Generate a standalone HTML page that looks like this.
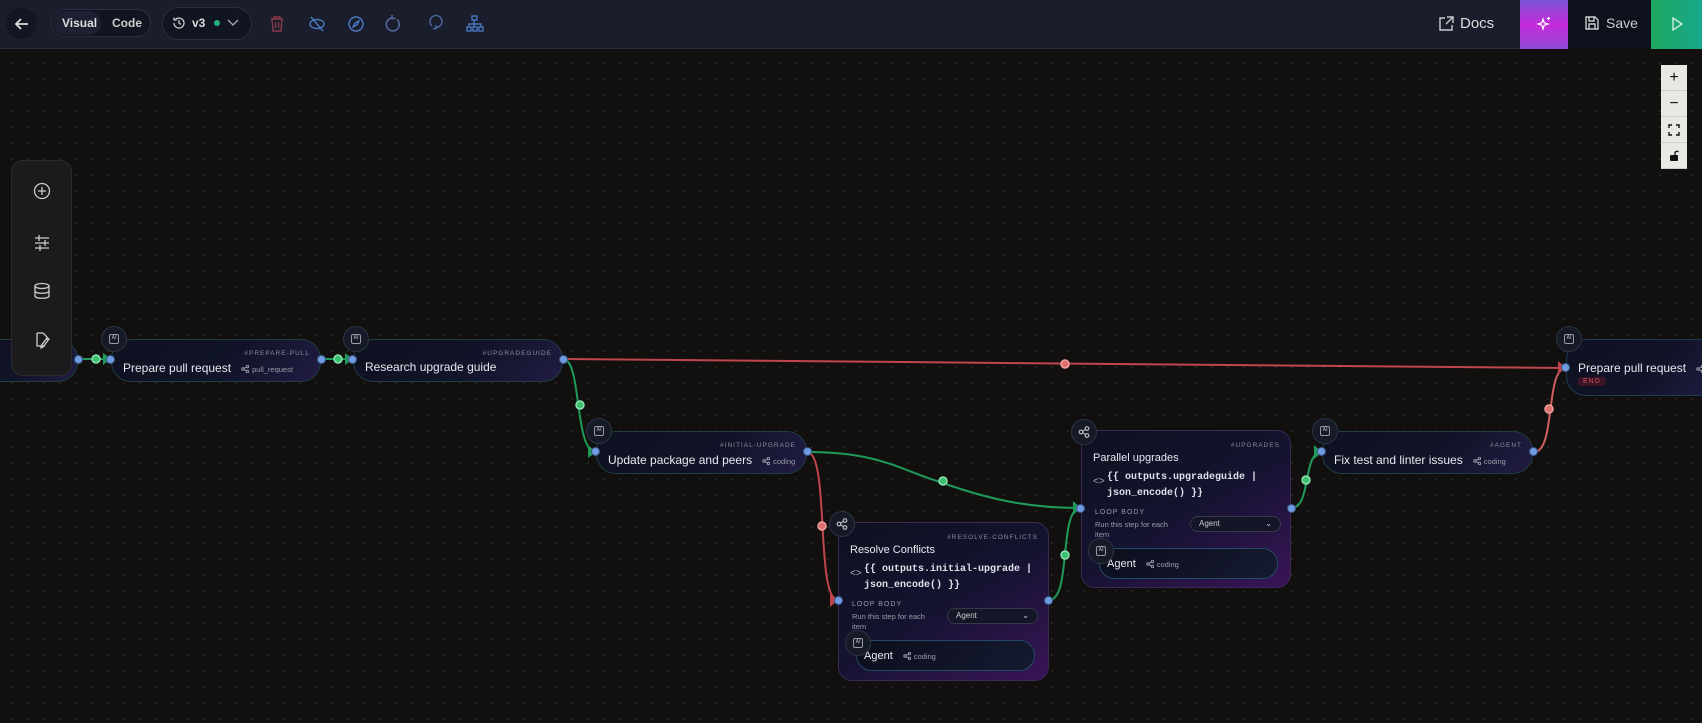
<!DOCTYPE html>
<html><head><meta charset="utf-8"><style>
*{box-sizing:border-box;margin:0;padding:0}
body{width:1702px;height:723px;overflow:hidden;background:#12100e;font-family:"Liberation Sans",sans-serif;color:#e6e6ea;position:relative}
.grid{position:absolute;left:0;top:49px;width:1702px;height:674px;background-image:radial-gradient(circle,#262524 0.8px,transparent 1.2px);background-size:16px 16px;background-position:4px 6px}
.top{position:absolute;left:0;top:0;width:1702px;height:49px;background:#1a1d2b;border-bottom:1px solid #2a2d3a}
.abs{position:absolute}
.node{position:absolute;border:1px solid #1f3d44;border-radius:20px;background:linear-gradient(135deg,#0e1120 0%,#111428 55%,#211c44 100%)}
.loop{position:absolute;border:1px solid #3b2a55;border-radius:14px;background:linear-gradient(150deg,#0e1120 0%,#141330 50%,#3a1458 100%)}
.ic{position:absolute;width:26px;height:26px;border-radius:50%;background:#151a26;border:1px solid #2a3444;display:flex;align-items:center;justify-content:center}
.chip{width:10px;height:10px;border:1.2px solid #99a;border-radius:2px;font-size:5px;line-height:7.5px;text-align:center;color:#99a;font-weight:bold}
.title{position:absolute;font-size:12px;color:#e8e8ee;white-space:nowrap}
.hash{position:absolute;font-size:6.5px;letter-spacing:1px;color:#8a8d99;white-space:nowrap}
.sub{font-size:7.5px;color:#9a9ca8;margin-left:10px}
.sub svg{vertical-align:-1px;margin-right:3px}
.port{position:absolute;width:9px;height:9px;border-radius:50%;background:#6f9be0;border:1px solid #3a5a8a}
.code{position:absolute;font-family:"Liberation Mono",monospace;font-size:10px;font-weight:bold;color:#e0e0e8;line-height:16px}
.small{position:absolute;font-size:7.5px;color:#9a9ca8}
.sel{position:absolute;height:16px;border:1px solid #333a4a;border-radius:9px;background:#141628;font-size:8px;color:#ccc;padding:2px 8px}
.inner{position:absolute;border:1px solid #234a66;border-radius:16px;background:linear-gradient(135deg,#0b0e1c,#161a30)}
.sb{position:absolute;left:11px;top:160px;width:61px;height:216px;border-radius:12px;background:#1b1b1d;border:1px solid #2b2b2e}
.zc{position:absolute;left:1661px;width:26px;height:26px;background:#e8e8e5;border-bottom:1px solid #ccc;display:flex;align-items:center;justify-content:center;color:#111;font-size:16px}
</style></head><body>
<div class="grid"></div>

<svg class="abs" style="left:0;top:0" width="1702" height="723">
<g fill="none" stroke-width="2">
<path d="M563 359 L1566 368" stroke="#c0464e"/>
<path d="M563 359 C582 359 574 452 596 452" stroke="#1f9a5a"/>
<path d="M78 359 L111 359" stroke="#1f9a5a"/>
<path d="M321 359 L353 359" stroke="#1f9a5a"/>
<path d="M807 452 C880 452 900 470 940 482 C990 500 1030 508 1081 508" stroke="#1f9a5a"/>
<path d="M807 452 C830 452 815 600 838 600" stroke="#c0464e"/>
<path d="M1049 600 C1072 600 1058 508 1081 508" stroke="#1f9a5a"/>
<path d="M1291 508 C1312 508 1302 452 1322 452" stroke="#1f9a5a"/>
<path d="M1534 452 C1556 452 1545 368 1566 368" stroke="#d06060"/>
</g>
<g>
<polygon points="1558,361 1566,368 1558,374" fill="#c0464e"/>
<polygon points="588,445 596,452 588,458" fill="#1f9a5a"/>
<polygon points="830,593 838,600 830,607" fill="#c0464e"/>
<polygon points="1073,501 1081,508 1073,515" fill="#1f9a5a"/>
<polygon points="1314,445 1322,452 1314,459" fill="#1f9a5a"/>
<polygon points="103,353 111,359 103,365" fill="#1f9a5a"/>
<polygon points="345,353 353,359 345,365" fill="#1f9a5a"/>
</g>
<g stroke-width="1.5">
<circle cx="1065" cy="364" r="4" fill="#e07070" stroke="#f0a0a0"/>
<circle cx="580" cy="405" r="4" fill="#3bc070" stroke="#8fe0b0"/>
<circle cx="943" cy="481" r="4" fill="#3bc070" stroke="#8fe0b0"/>
<circle cx="822" cy="526" r="4" fill="#e07070" stroke="#f0a0a0"/>
<circle cx="1065" cy="555" r="4" fill="#3bc070" stroke="#8fe0b0"/>
<circle cx="1306" cy="480" r="4" fill="#3bc070" stroke="#8fe0b0"/>
<circle cx="1549" cy="409" r="4" fill="#e07070" stroke="#f0a0a0"/>
<circle cx="96" cy="359" r="4" fill="#3bc070" stroke="#8fe0b0"/>
<circle cx="338" cy="359" r="4" fill="#3bc070" stroke="#8fe0b0"/>
</g>
</svg>

<div class="node" style="left:-30px;top:339px;width:108px;height:43px"></div>
<div class="port" style="left:74px;top:355px"></div>

<div class="node" style="left:111px;top:339px;width:210px;height:43px">
<div class="hash" style="right:10px;top:10px">#PREPARE-PULL</div>
<div class="title" style="left:11px;top:21px">Prepare pull request<span class="sub"><svg width="8" height="8" fill="none" stroke="#9a9ca8" stroke-width="1"><circle cx="2" cy="4" r="1.2"/><circle cx="6.5" cy="1.5" r="1.2"/><circle cx="6.5" cy="6.5" r="1.2"/><path d="M3 3.4l2.5-1.4M3 4.6l2.5 1.4"/></svg>pull_request</span></div></div>
<div class="ic" style="left:101px;top:326px"><div class="chip">AI</div></div>
<div class="port" style="left:106px;top:355px"></div><div class="port" style="left:317px;top:355px"></div>

<div class="node" style="left:353px;top:339px;width:210px;height:43px">
<div class="hash" style="right:10px;top:10px">#UPGRADEGUIDE</div>
<div class="title" style="left:11px;top:20px">Research upgrade guide</div></div>
<div class="ic" style="left:343px;top:326px"><div class="chip">AI</div></div>
<div class="port" style="left:348px;top:355px"></div><div class="port" style="left:559px;top:355px"></div>

<div class="node" style="left:596px;top:431px;width:211px;height:43px">
<div class="hash" style="right:10px;top:10px">#INITIAL-UPGRADE</div>
<div class="title" style="left:11px;top:21px">Update package and peers<span class="sub"><svg width="8" height="8" fill="none" stroke="#9a9ca8" stroke-width="1"><circle cx="2" cy="4" r="1.2"/><circle cx="6.5" cy="1.5" r="1.2"/><circle cx="6.5" cy="6.5" r="1.2"/><path d="M3 3.4l2.5-1.4M3 4.6l2.5 1.4"/></svg>coding</span></div></div>
<div class="ic" style="left:586px;top:418px"><div class="chip">AI</div></div>
<div class="port" style="left:591px;top:447px"></div><div class="port" style="left:803px;top:447px"></div>

<div class="node" style="left:1322px;top:431px;width:211px;height:43px">
<div class="hash" style="right:10px;top:10px">#AGENT</div>
<div class="title" style="left:11px;top:21px">Fix test and linter issues<span class="sub"><svg width="8" height="8" fill="none" stroke="#9a9ca8" stroke-width="1"><circle cx="2" cy="4" r="1.2"/><circle cx="6.5" cy="1.5" r="1.2"/><circle cx="6.5" cy="6.5" r="1.2"/><path d="M3 3.4l2.5-1.4M3 4.6l2.5 1.4"/></svg>coding</span></div></div>
<div class="ic" style="left:1312px;top:418px"><div class="chip">AI</div></div>
<div class="port" style="left:1317px;top:447px"></div><div class="port" style="left:1529px;top:447px"></div>

<div class="node" style="left:1566px;top:339px;width:160px;height:57px;border-color:#1f3a55">
<div class="title" style="left:11px;top:21px">Prepare pull request<span class="sub"><svg width="8" height="8" fill="none" stroke="#9a9ca8" stroke-width="1"><circle cx="2" cy="4" r="1.2"/><circle cx="6.5" cy="1.5" r="1.2"/><circle cx="6.5" cy="6.5" r="1.2"/><path d="M3 3.4l2.5-1.4M3 4.6l2.5 1.4"/></svg>pull_r</span></div>
<div class="abs" style="left:11px;top:37px;font-size:7px;letter-spacing:1px;color:#d0506a;background:#3a1424;border-radius:3px;padding:1px 5px">END</div></div>
<div class="ic" style="left:1556px;top:326px"><div class="chip">AI</div></div>
<div class="port" style="left:1561px;top:363px"></div>

<div class="loop" style="left:838px;top:522px;width:211px;height:159px">
<div class="hash" style="right:10px;top:11px">#RESOLVE-CONFLICTS</div>
<div class="title" style="left:11px;top:21px;font-size:11px">Resolve Conflicts</div>
<div class="small" style="left:11px;top:45px;font-size:10px;color:#aaa">&lt;&gt;</div>
<div class="code" style="left:25px;top:39px">{{ outputs.initial-upgrade |<br>json_encode() }}</div>
<div class="small" style="left:13px;top:78px;letter-spacing:1px;font-size:7px">LOOP BODY</div>
<div class="small" style="left:13px;top:89px;line-height:10px">Run this step for each<br>item</div>
<div class="sel" style="left:108px;top:85px;width:91px">Agent<span style="float:right">⌄</span></div>
<div class="inner" style="left:17px;top:117px;width:179px;height:31px">
<div class="title" style="left:7px;top:9px;font-size:11px">Agent<span class="sub"><svg width="8" height="8" fill="none" stroke="#9a9ca8" stroke-width="1"><circle cx="2" cy="4" r="1.2"/><circle cx="6.5" cy="1.5" r="1.2"/><circle cx="6.5" cy="6.5" r="1.2"/><path d="M3 3.4l2.5-1.4M3 4.6l2.5 1.4"/></svg>coding</span></div></div>
<div class="ic" style="left:6px;top:107px"><div class="chip">AI</div></div>
</div>
<div class="ic" style="left:829px;top:511px"><svg width="12" height="12" fill="none" stroke="#bbb" stroke-width="1.2"><circle cx="3" cy="6" r="1.8"/><circle cx="9" cy="2.5" r="1.8"/><circle cx="9" cy="9.5" r="1.8"/><path d="M4.6 5.1l2.8-1.6M4.6 6.9l2.8 1.6"/></svg></div>
<div class="port" style="left:834px;top:596px"></div><div class="port" style="left:1044px;top:596px"></div>

<div class="loop" style="left:1081px;top:430px;width:210px;height:158px">
<div class="hash" style="right:10px;top:11px">#UPGRADES</div>
<div class="title" style="left:11px;top:21px;font-size:11px">Parallel upgrades</div>
<div class="small" style="left:11px;top:45px;font-size:10px;color:#aaa">&lt;&gt;</div>
<div class="code" style="left:25px;top:39px">{{ outputs.upgradeguide |<br>json_encode() }}</div>
<div class="small" style="left:13px;top:78px;letter-spacing:1px;font-size:7px">LOOP BODY</div>
<div class="small" style="left:13px;top:89px;line-height:10px">Run this step for each<br>item</div>
<div class="sel" style="left:108px;top:85px;width:91px">Agent<span style="float:right">⌄</span></div>
<div class="inner" style="left:17px;top:117px;width:179px;height:31px">
<div class="title" style="left:7px;top:9px;font-size:11px">Agent<span class="sub"><svg width="8" height="8" fill="none" stroke="#9a9ca8" stroke-width="1"><circle cx="2" cy="4" r="1.2"/><circle cx="6.5" cy="1.5" r="1.2"/><circle cx="6.5" cy="6.5" r="1.2"/><path d="M3 3.4l2.5-1.4M3 4.6l2.5 1.4"/></svg>coding</span></div></div>
<div class="ic" style="left:6px;top:107px"><div class="chip">AI</div></div>
</div>
<div class="ic" style="left:1071px;top:419px"><svg width="12" height="12" fill="none" stroke="#bbb" stroke-width="1.2"><circle cx="3" cy="6" r="1.8"/><circle cx="9" cy="2.5" r="1.8"/><circle cx="9" cy="9.5" r="1.8"/><path d="M4.6 5.1l2.8-1.6M4.6 6.9l2.8 1.6"/></svg></div>
<div class="port" style="left:1076px;top:504px"></div><div class="port" style="left:1287px;top:504px"></div>

<div class="sb">
<svg class="abs" style="left:20px;top:20px" width="20" height="180" fill="none" stroke="#ccc" stroke-width="1.3">
<circle cx="10" cy="10" r="7.5"/><path d="M10 6v8M6 10h8"/>
<path d="M3 57h14M3 62h14M3 67h14M7 54v6M13 59v6M8 64v6"/>
<ellipse cx="10" cy="105" rx="7" ry="2.5"/><path d="M3 105v10c0 3 14 3 14 0v-10M3 110c0 3 14 3 14 0"/>
<path d="M5 152v13h8M5 152h6l4 4v3M17 158l-6 8-2 1 0-2 6-8z"/>
</svg></div>

<div class="zc" style="top:65px">+</div>
<div class="zc" style="top:91px">−</div>
<div class="zc" style="top:117px"><svg width="12" height="12" fill="none" stroke="#111" stroke-width="1.4"><path d="M1 4V1h3M8 1h3v3M11 8v3H8M4 11H1V8"/></svg></div>
<div class="zc" style="top:143px"><svg width="10" height="12" fill="#111"><path d="M6 5V3a2 2 0 0 1 3.5-1" stroke="#111" fill="none" stroke-width="1.3"/><rect x="1" y="5" width="8" height="6" rx="1"/></svg></div>

<div class="top">
<div class="abs" style="left:6px;top:8px;width:31px;height:31px;border-radius:50%;background:#121522"></div>
<svg class="abs" style="left:12px;top:14px" width="20" height="20" fill="none" stroke="#ddd" stroke-width="1.8"><path d="M16 10H4M9 5l-5 5 5 5"/></svg>
<div class="abs" style="left:51px;top:9px;width:100px;height:28px;border-radius:14px;background:#111421;border:1px solid #2b2f3e"></div>
<div class="abs" style="left:53px;top:11px;width:48px;height:24px;border-radius:12px;background:#1c2030"></div>
<div class="abs" style="left:62px;top:16px;font-size:12px;font-weight:bold;color:#ddd">Visual</div>
<div class="abs" style="left:112px;top:16px;font-size:12px;font-weight:bold;color:#ccc">Code</div>
<div class="abs" style="left:162px;top:7px;width:90px;height:33px;border-radius:17px;background:#111421;border:1px solid #2b2f3e"></div>
<svg class="abs" style="left:172px;top:16px" width="14" height="14" fill="none" stroke="#ccc" stroke-width="1.3"><path d="M2 7a5 5 0 1 0 1.5-3.5M2 1.5v2.5h2.5M7 4v3l2 1.5"/></svg>
<div class="abs" style="left:192px;top:16px;font-size:12px;font-weight:bold;color:#ddd">v3</div>
<div class="abs" style="left:214px;top:20px;width:6px;height:6px;border-radius:50%;background:#22b07a"></div>
<svg class="abs" style="left:227px;top:18px" width="12" height="10" fill="none" stroke="#aaa" stroke-width="1.3"><path d="M1 2l5 5 5-5"/></svg>
<svg class="abs" style="left:268px;top:14px" width="230" height="20" fill="none" stroke-width="1.4">
<g stroke="#8a3a4a"><path d="M3 5h12M6 5V3h6v2M4 5l1 12h8l1-12M7.5 8v6M10.5 8v6"/></g>
<g stroke="#4a78c0"><ellipse cx="49" cy="10" rx="7" ry="4.5"/><path d="M43 3l12 14"/>
<circle cx="88" cy="10" r="7"/><path d="M91 7l-2 4-4 2 2-4z"/>
<path d="M124 4a6.5 6.5 0 1 0 5 1.5M124 1v3.5h3.5" stroke="#5a70a8"/>
<path d="M164 12a6 6 0 1 1 4 1.5M168 11v3.5h-3" stroke="#4a6aa8"/>
<rect x="204" y="2" width="5" height="4"/><rect x="199" y="13" width="4" height="4"/><rect x="205" y="13" width="4" height="4"/><rect x="211" y="13" width="4" height="4"/><path d="M206 6v7M201 13v-3h12v3"/></g>
</svg>
<svg class="abs" style="left:1437px;top:15px" width="18" height="18" fill="none" stroke="#ccc" stroke-width="1.4"><path d="M8 3H3v12h12v-5M10 2h6v6M16 2l-7 7"/></svg>
<div class="abs" style="left:1460px;top:15px;font-size:15px;color:#ddd">Docs</div>
<div class="abs" style="left:1520px;top:0;width:48px;height:49px;background:linear-gradient(180deg,#7a56d8,#c42ad8 50%,#8e4ad8)"></div>
<svg class="abs" style="left:1536px;top:16px" width="16" height="16" fill="none" stroke="#fff" stroke-width="1.2"><path d="M7 3l1.2 3.8L12 8l-3.8 1.2L7 13l-1.2-3.8L2 8l3.8-1.2z"/><path d="M12.5 1v3M11 2.5h3"/></svg>
<div class="abs" style="left:1568px;top:0;width:83px;height:49px;background:#0e101b"></div>
<svg class="abs" style="left:1584px;top:15px" width="16" height="16" fill="none" stroke="#ccc" stroke-width="1.4"><path d="M2 2h9l3 3v9H2z M5 2v4h5V2 M5 14V9h6v5"/></svg>
<div class="abs" style="left:1606px;top:15px;font-size:14px;color:#ccc">Save</div>
<div class="abs" style="left:1651px;top:0;width:51px;height:49px;background:linear-gradient(90deg,#1ea860,#17a88a)"></div>
<svg class="abs" style="left:1670px;top:16px" width="14" height="16" fill="none" stroke="#cfeedd" stroke-width="1.4"><path d="M3 2l9 6-9 6z"/></svg>
</div>
</body></html>
